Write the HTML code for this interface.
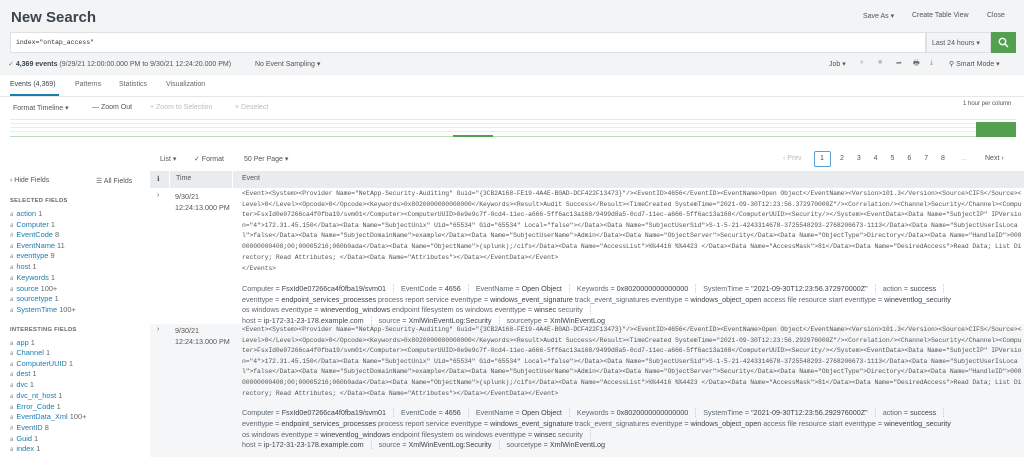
<!DOCTYPE html>
<html><head><meta charset="utf-8"><style>
*{margin:0;padding:0;box-sizing:border-box}
body{width:1024px;height:457px;overflow:hidden;background:#fff;font-family:"Liberation Sans",sans-serif;color:#3c444d;position:relative}
.a{position:absolute;white-space:nowrap}
.s{font-size:7px}
.m{font-family:"Liberation Mono",monospace;font-size:6.4px;color:#555;position:absolute;left:242px;white-space:nowrap;letter-spacing:-0.07px}
.f{font-size:7.2px;color:#5c6773;position:absolute;left:242px;white-space:nowrap}
.f b{font-weight:normal;color:#3c444d}
.sep{display:inline-block;width:0;height:9px;border-left:1px dotted #ccc;margin:0 7px;vertical-align:-2px}
.fl{position:absolute;left:10px;font-size:7.4px;color:#1a7db0;white-space:nowrap}
.fl i{font-style:italic;color:#888;font-size:6px;margin-right:3px}
.fl span{color:#666}
.hd{position:absolute;left:10px;font-size:5.8px;color:#666;letter-spacing:.3px;font-weight:bold}
</style></head><body>
<div class="a" style="left:0;top:0;width:1024px;height:75px;background:#f2f4f5"></div>
<div class="a" style="left:11px;top:9px;font-size:15px;font-weight:bold;color:#3c444d">New Search</div>
<div class="a s" style="left:863px;top:12px;color:#555">Save As ▾</div>
<div class="a s" style="left:912px;top:12px;color:#555">Create Table View</div>
<div class="a s" style="left:987px;top:12px;color:#555">Close</div>
<div class="a" style="left:10px;top:32px;width:916px;height:21px;background:#fff;border:1px solid #dde1e4"></div>
<div class="a" style="left:16px;top:39px;font-family:'Liberation Mono',monospace;font-size:6.5px;color:#333">index="ontap_access"</div>
<div class="a" style="left:926px;top:32px;width:65px;height:21px;background:#f2f4f5;border:1px solid #dde1e4"></div>
<div class="a s" style="left:932px;top:39px;color:#555">Last 24 hours ▾</div>
<div class="a" style="left:991px;top:32px;width:25px;height:21px;background:#53a051"></div>
<svg class="a" style="left:998px;top:37px" width="11" height="11" viewBox="0 0 11 11"><circle cx="4.5" cy="4.5" r="3.2" fill="none" stroke="#fff" stroke-width="1.4"/><path d="M7 7l3 3" stroke="#fff" stroke-width="1.5"/></svg>
<div class="a s" style="left:8px;top:60px;color:#555"><span style="color:#53a051">✓</span> <b style="color:#3c444d">4,369 events</b> (9/29/21 12:00:00.000 PM to 9/30/21 12:24:20.000 PM)</div>
<div class="a s" style="left:255px;top:60px;color:#555">No Event Sampling ▾</div>
<div class="a s" style="left:829px;top:60px;color:#555">Job ▾</div>
<div class="a s" style="left:860px;top:59px;color:#bbb">⏸</div>
<div class="a s" style="left:878px;top:59px;color:#bbb">■</div>
<div class="a s" style="left:896px;top:59px;color:#888">➦</div>
<div class="a s" style="left:913px;top:59px;color:#666">🖶</div>
<div class="a s" style="left:930px;top:59px;color:#888">⤓</div>
<div class="a s" style="left:949px;top:60px;color:#555">⚲ Smart Mode ▾</div>
<div class="a s" style="left:10px;top:81px;color:#3c444d">Events (4,369)</div>
<div class="a" style="left:10px;top:94px;width:49px;height:2px;background:#1a7db0"></div>
<div class="a s" style="left:75px;top:81px;color:#666">Patterns</div>
<div class="a s" style="left:119px;top:81px;color:#666">Statistics</div>
<div class="a s" style="left:166px;top:81px;color:#666">Visualization</div>
<div class="a" style="left:0;top:96px;width:1024px;height:1px;background:#e5e8ea"></div>
<div class="a s" style="left:13px;top:104px;color:#555">Format Timeline ▾</div>
<div class="a s" style="left:92px;top:104px;color:#555">— Zoom Out</div>
<div class="a s" style="left:150px;top:104px;color:#bbb">+ Zoom to Selection</div>
<div class="a s" style="left:235px;top:104px;color:#bbb">× Deselect</div>
<div class="a" style="left:963px;top:101px;font-size:6px;color:#555">1 hour per column</div>
<div class="a" style="left:10px;top:119px;width:1006px;height:1px;background:#e8e8e8"></div>
<div class="a" style="left:10px;top:123px;width:1006px;height:1px;background:#ececec"></div>
<div class="a" style="left:10px;top:127px;width:1006px;height:1px;background:#ececec"></div>
<div class="a" style="left:10px;top:131px;width:1006px;height:1px;background:#ececec"></div>
<div class="a" style="left:10px;top:136px;width:1006px;height:1px;background:#b9dfb7"></div>
<div class="a" style="left:453px;top:135px;width:40px;height:2px;background:#53a051"></div>
<div class="a" style="left:976px;top:122px;width:40px;height:15px;background:#53a051"></div>
<div class="a s" style="left:160px;top:155px;color:#555">List ▾</div>
<div class="a s" style="left:194px;top:155px;color:#555">✓ Format</div>
<div class="a s" style="left:244px;top:155px;color:#555">50 Per Page ▾</div>
<div class="a s" style="left:783px;top:155px;color:#bbb">‹ Prev</div>
<div class="a" style="left:814px;top:151px;width:17px;height:16px;border:1px solid #5a9fd4;border-radius:2px;background:#fff"></div>
<div class="a s" style="left:820px;top:155px;color:#3c444d">1</div>
<div class="a s" style="left:840px;top:155px;color:#555;word-spacing:11px">2 3 4 5 6 7 8</div>
<div class="a s" style="left:961px;top:155px;color:#bbb">...</div>
<div class="a s" style="left:985px;top:155px;color:#555">Next ›</div>
<div class="a s" style="left:10px;top:177px;color:#555">‹ Hide Fields</div>
<div class="a s" style="left:96px;top:177px;color:#555">☰ All Fields</div>
<div class="a" style="left:150px;top:171px;width:874px;height:17px;background:#e9ecee"></div>
<div class="a" style="left:169px;top:171px;width:1px;height:17px;background:#fff"></div>
<div class="a" style="left:232px;top:171px;width:1px;height:17px;background:#fff"></div>
<div class="a s" style="left:157px;top:175px;color:#555">ℹ</div>
<div class="a s" style="left:176px;top:175px;color:#555">Time</div>
<div class="a s" style="left:242px;top:175px;color:#555">Event</div>
<div class="hd" style="top:198px">SELECTED FIELDS</div>
<div class="fl" style="top:209px"><i>a</i>action <span>1</span></div>
<div class="fl" style="top:220px"><i>a</i>Computer <span>1</span></div>
<div class="fl" style="top:230px"><i style="font-style:normal">#</i>EventCode <span>8</span></div>
<div class="fl" style="top:241px"><i>a</i>EventName <span>11</span></div>
<div class="fl" style="top:251px"><i>a</i>eventtype <span>9</span></div>
<div class="fl" style="top:262px"><i>a</i>host <span>1</span></div>
<div class="fl" style="top:273px"><i>a</i>Keywords <span>1</span></div>
<div class="fl" style="top:284px"><i>a</i>source <span>100+</span></div>
<div class="fl" style="top:294px"><i>a</i>sourcetype <span>1</span></div>
<div class="fl" style="top:305px"><i>a</i>SystemTime <span>100+</span></div>
<div class="hd" style="top:327px">INTERESTING FIELDS</div>
<div class="fl" style="top:338px"><i>a</i>app <span>1</span></div>
<div class="fl" style="top:348px"><i>a</i>Channel <span>1</span></div>
<div class="fl" style="top:359px"><i>a</i>ComputerUUID <span>1</span></div>
<div class="fl" style="top:369px"><i>a</i>dest <span>1</span></div>
<div class="fl" style="top:380px"><i>a</i>dvc <span>1</span></div>
<div class="fl" style="top:391px"><i>a</i>dvc_nt_host <span>1</span></div>
<div class="fl" style="top:402px"><i>a</i>Error_Code <span>1</span></div>
<div class="fl" style="top:412px"><i>a</i>EventData_Xml <span>100+</span></div>
<div class="fl" style="top:423px"><i style="font-style:normal">#</i>EventID <span>8</span></div>
<div class="fl" style="top:434px"><i>a</i>Guid <span>1</span></div>
<div class="fl" style="top:444px"><i>a</i>index <span>1</span></div>

<div class="a" style="left:150px;top:324px;width:874px;height:133px;background:#f5f6f7"></div>

<div class="a s" style="left:157px;top:192px;color:#555">›</div>
<div class="a s" style="left:175px;top:191px;color:#555;line-height:11px;font-size:7.2px">9/30/21<br>12:24:13.000 PM</div>
<div class="a s" style="left:157px;top:326px;color:#555">›</div>
<div class="a s" style="left:175px;top:325px;color:#555;line-height:11px;font-size:7.2px">9/30/21<br>12:24:13.000 PM</div>

<div class="m" style="top:190px">&lt;Event&gt;&lt;System&gt;&lt;Provider Name="NetApp-Security-Auditing" Guid="{3CB2A168-FE19-4A4E-B0AD-DCF422F13473}"/&gt;&lt;EventID&gt;4656&lt;/EventID&gt;&lt;EventName&gt;Open Object&lt;/EventName&gt;&lt;Version&gt;101.3&lt;/Version&gt;&lt;Source&gt;CIFS&lt;/Source&gt;&lt;</div>
<div class="m" style="top:201px">Level&gt;0&lt;/Level&gt;&lt;Opcode&gt;0&lt;/Opcode&gt;&lt;Keywords&gt;0x8020000000000000&lt;/Keywords&gt;&lt;Result&gt;Audit Success&lt;/Result&gt;&lt;TimeCreated SystemTime="2021-09-30T12:23:56.372970000Z"/&gt;&lt;Correlation/&gt;&lt;Channel&gt;Security&lt;/Channel&gt;&lt;Compu</div>
<div class="m" style="top:211px">ter&gt;FsxId0e07266ca4f0fba19/svm01&lt;/Computer&gt;&lt;ComputerUUID&gt;0e9e9c7f-0cd4-11ec-a666-5ff6ac13a168/9499d8a5-0cd7-11ec-a666-5ff6ac13a168&lt;/ComputerUUID&gt;&lt;Security/&gt;&lt;/System&gt;&lt;EventData&gt;&lt;Data Name="SubjectIP" IPVersio</div>
<div class="m" style="top:222px">n="4"&gt;172.31.45.150&lt;/Data&gt;&lt;Data Name="SubjectUnix" Uid="65534" Gid="65534" Local="false"&gt;&lt;/Data&gt;&lt;Data Name="SubjectUserSid"&gt;S-1-5-21-4243314678-3725548293-2768206673-1113&lt;/Data&gt;&lt;Data Name="SubjectUserIsLoca</div>
<div class="m" style="top:232px">l"&gt;false&lt;/Data&gt;&lt;Data Name="SubjectDomainName"&gt;example&lt;/Data&gt;&lt;Data Name="SubjectUserName"&gt;Admin&lt;/Data&gt;&lt;Data Name="ObjectServer"&gt;Security&lt;/Data&gt;&lt;Data Name="ObjectType"&gt;Directory&lt;/Data&gt;&lt;Data Name="HandleID"&gt;000</div>
<div class="m" style="top:243px">00000000408;00;00005216;060b0ada&lt;/Data&gt;&lt;Data Name="ObjectName"&gt;(splunk);/cifs&lt;/Data&gt;&lt;Data Name="AccessList"&gt;%%4416 %%4423 &lt;/Data&gt;&lt;Data Name="AccessMask"&gt;81&lt;/Data&gt;&lt;Data Name="DesiredAccess"&gt;Read Data; List Di</div>
<div class="m" style="top:254px">rectory; Read Attributes; &lt;/Data&gt;&lt;Data Name="Attributes"&gt;&lt;/Data&gt;&lt;/EventData&gt;&lt;/Event&gt;</div>
<div class="m" style="top:265px">&lt;/Events&gt;</div>
<div class="f" style="top:284px">Computer = <b>FsxId0e07266ca4f0fba19/svm01</b><span class="sep"></span>EventCode = <b>4656</b><span class="sep"></span>EventName = <b>Open Object</b><span class="sep"></span>Keywords = <b>0x8020000000000000</b><span class="sep"></span>SystemTime = <b>"2021-09-30T12:23:56.372970000Z"</b><span class="sep"></span>action = <b>success</b><span class="sep"></span></div>
<div class="f" style="top:295px">eventtype = <b>endpoint_services_processes</b> process report service eventtype = <b>windows_event_signature</b> track_event_signatures eventtype = <b>windows_object_open</b> access file resource start eventtype = <b>wineventlog_security</b></div>
<div class="f" style="top:305px">os windows eventtype = <b>wineventlog_windows</b> endpoint filesystem os windows eventtype = <b>winsec</b> security<span class="sep"></span></div>
<div class="f" style="top:316px">host = <b>ip-172-31-23-178.example.com</b><span class="sep"></span>source = <b>XmlWinEventLog:Security</b><span class="sep"></span>sourcetype = <b>XmlWinEventLog</b></div>

<div class="m" style="top:326px">&lt;Event&gt;&lt;System&gt;&lt;Provider Name="NetApp-Security-Auditing" Guid="{3CB2A168-FE19-4A4E-B0AD-DCF422F13473}"/&gt;&lt;EventID&gt;4656&lt;/EventID&gt;&lt;EventName&gt;Open Object&lt;/EventName&gt;&lt;Version&gt;101.3&lt;/Version&gt;&lt;Source&gt;CIFS&lt;/Source&gt;&lt;</div>
<div class="m" style="top:337px">Level&gt;0&lt;/Level&gt;&lt;Opcode&gt;0&lt;/Opcode&gt;&lt;Keywords&gt;0x8020000000000000&lt;/Keywords&gt;&lt;Result&gt;Audit Success&lt;/Result&gt;&lt;TimeCreated SystemTime="2021-09-30T12:23:56.292976000Z"/&gt;&lt;Correlation/&gt;&lt;Channel&gt;Security&lt;/Channel&gt;&lt;Compu</div>
<div class="m" style="top:347px">ter&gt;FsxId0e07266ca4f0fba19/svm01&lt;/Computer&gt;&lt;ComputerUUID&gt;0e9e9c7f-0cd4-11ec-a666-5ff6ac13a168/9499d8a5-0cd7-11ec-a666-5ff6ac13a168&lt;/ComputerUUID&gt;&lt;Security/&gt;&lt;/System&gt;&lt;EventData&gt;&lt;Data Name="SubjectIP" IPVersio</div>
<div class="m" style="top:358px">n="4"&gt;172.31.45.150&lt;/Data&gt;&lt;Data Name="SubjectUnix" Uid="65534" Gid="65534" Local="false"&gt;&lt;/Data&gt;&lt;Data Name="SubjectUserSid"&gt;S-1-5-21-4243314678-3725548293-2768206673-1113&lt;/Data&gt;&lt;Data Name="SubjectUserIsLoca</div>
<div class="m" style="top:368px">l"&gt;false&lt;/Data&gt;&lt;Data Name="SubjectDomainName"&gt;example&lt;/Data&gt;&lt;Data Name="SubjectUserName"&gt;Admin&lt;/Data&gt;&lt;Data Name="ObjectServer"&gt;Security&lt;/Data&gt;&lt;Data Name="ObjectType"&gt;Directory&lt;/Data&gt;&lt;Data Name="HandleID"&gt;000</div>
<div class="m" style="top:379px">00000000408;00;00005216;060b0ada&lt;/Data&gt;&lt;Data Name="ObjectName"&gt;(splunk);/cifs&lt;/Data&gt;&lt;Data Name="AccessList"&gt;%%4416 %%4423 &lt;/Data&gt;&lt;Data Name="AccessMask"&gt;81&lt;/Data&gt;&lt;Data Name="DesiredAccess"&gt;Read Data; List Di</div>
<div class="m" style="top:390px">rectory; Read Attributes; &lt;/Data&gt;&lt;Data Name="Attributes"&gt;&lt;/Data&gt;&lt;/EventData&gt;&lt;/Event&gt;</div>
<div class="f" style="top:408px">Computer = <b>FsxId0e07266ca4f0fba19/svm01</b><span class="sep"></span>EventCode = <b>4656</b><span class="sep"></span>EventName = <b>Open Object</b><span class="sep"></span>Keywords = <b>0x8020000000000000</b><span class="sep"></span>SystemTime = <b>"2021-09-30T12:23:56.292976000Z"</b><span class="sep"></span>action = <b>success</b><span class="sep"></span></div>
<div class="f" style="top:419px">eventtype = <b>endpoint_services_processes</b> process report service eventtype = <b>windows_event_signature</b> track_event_signatures eventtype = <b>windows_object_open</b> access file resource start eventtype = <b>wineventlog_security</b></div>
<div class="f" style="top:430px">os windows eventtype = <b>wineventlog_windows</b> endpoint filesystem os windows eventtype = <b>winsec</b> security<span class="sep"></span></div>
<div class="f" style="top:440px">host = <b>ip-172-31-23-178.example.com</b><span class="sep"></span>source = <b>XmlWinEventLog:Security</b><span class="sep"></span>sourcetype = <b>XmlWinEventLog</b></div>
</body></html>
